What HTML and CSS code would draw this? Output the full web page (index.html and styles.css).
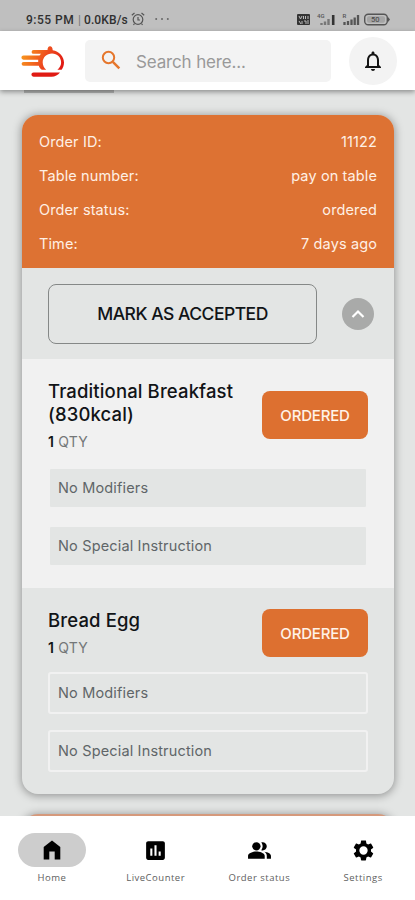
FILE: index.html
```html
<!DOCTYPE html>
<html lang="en">
<head>
<meta charset="utf-8">
<meta name="viewport" content="width=device-width, initial-scale=1">
<title>Orders</title>
<link rel="stylesheet" href="styles.css">
</head>
<body>
<div class="app">
  <div class="status">
    <span class="clock">9:55 PM</span><span class="bar">|</span><span class="speed">0.0KB/s</span>
    <svg class="alarm" viewBox="0 0 14 14" width="14" height="14" fill="none" stroke="#555" stroke-width="1.2"><circle cx="7" cy="7.5" r="4.800"/><path d="M7 5v3h2M.8 3.200 3.500 1M13.200 3.200 10.500 1M3.500 11.500l-1 1.500M10.500 11.500l1 1.500"/></svg>
    <svg class="dots" viewBox="0 0 14 4" width="14" height="4" fill="#666"><circle cx="1.200" cy="2" r="1"/><circle cx="7" cy="2" r="1"/><circle cx="12.800" cy="2" r="1"/></svg>
    <svg class="signals" viewBox="0 0 94 14" width="94" height="14">
      <rect x="0" y="2" width="13" height="11" rx="1" fill="#333"/>
      <path d="M2 4l1.500 3L5 4M6.500 4v3M8.500 4v3M11 4v3M2 9l2 3M5 9v3M7 9h2v3M11 8v4" stroke="#bbb" fill="none"/>
      <text x="20" y="5.500" class="tiny">4G</text>
      <path d="M24.500 13v-2M28 13V9.500M31.500 13V7" stroke="#777" stroke-width="2.400"/><path d="M36.200 13V3" stroke="#333" stroke-width="2.600"/>
      <text x="45.500" y="5.500" class="tiny">R</text>
      <path d="M47.500 13v-3M51 13v-4M54.500 13V7.500M57.700 13V5.500M61 13V3" stroke="#555" stroke-width="2.300"/>
      <rect x="67.700" y="2.200" width="22.600" height="10.600" rx="3.500" fill="none" stroke="#555" stroke-width="1.400"/>
      <path d="M91 5l2 2.500-2 2.500z" fill="#555"/>
      <rect x="70" y="4.300" width="18" height="6.400" rx="2" fill="#a5a5a5"/>
      <text x="74" y="10.300" class="charge">50</text>
    </svg>
  </div>
  <header class="header">
    <svg class="logo" viewBox="0 0 44 34" width="44" height="34">
      <defs><linearGradient id="flame" gradientUnits="userSpaceOnUse" x1="4" y1="8" x2="40" y2="28"><stop offset="0" stop-color="#f7931e"/><stop offset=".5" stop-color="#ee4b1e"/><stop offset="1" stop-color="#df1512"/></linearGradient></defs>
      <g fill="url(#flame)">
        <path d="M12.500 6H26.500c0-2 1-3.700 2.500-3.700s2.700 1.500 2.700 3.900C38 7.300 43 12.500 43 18.500c0 3-1 5.300-2.400 7.200h-4.200c2.200-1.800 3.700-4.200 3.700-7.200 0-5.200-3.900-9-9.100-9s-9.300 3.800-9.300 9c0 2.900 1.300 5.500 3.500 7.200h-4.400c-1.400-1-2.500-2.400-3-4H2.500a1.900 1.900 0 0 1 0-3.800H17.200v-2.200H2.500a2 2 0 0 1 0-4.200H18.500L20 9.800h-7.500a1.900 1.900 0 0 1 0-3.800z"/>
      </g>
      <path d="M12.500 28.500H39c-2 2.500-5 4.200-8.500 4.200h-18a2.100 2.100 0 0 1 0-4.200z" fill="#e01b14"/>
    </svg>
    <div class="search">
      <svg viewBox="0 0 20 20" width="20" height="20" fill="none" stroke="#e5762c" stroke-width="2"><circle cx="7.500" cy="7.500" r="5.700"/><path d="m11.800 11.800 6.500 6.500" stroke-width="2.500"/></svg>
      <span>Search here...</span>
    </div>
    <div class="bell">
      <svg viewBox="0 0 24 24" width="24" height="24" fill="#151515"><path d="M12 22c1.100 0 2-.9 2-2h-4c0 1.100.9 2 2 2zm6-6v-5c0-3.070-1.630-5.640-4.500-6.320V4c0-.83-.67-1.500-1.500-1.500s-1.500.67-1.500 1.500v.68C7.640 5.360 6 7.920 6 11v5l-2 2v1h16v-1l-2-2zm-2 1H8v-6c0-2.480 1.510-4.500 4-4.500s4 2.020 4 4.500v6z"/></svg>
    </div>
  </header>
  <main class="content">
    <div class="tab-edge"></div>
    <article class="card">
      <dl class="summary">
        <div><dt>Order ID:</dt><dd>11122</dd></div>
        <div><dt>Table number:</dt><dd>pay on table</dd></div>
        <div><dt>Order status:</dt><dd>ordered</dd></div>
        <div><dt>Time:</dt><dd>7 days ago</dd></div>
      </dl>
      <div class="actions">
        <button class="accept">MARK AS ACCEPTED</button>
        <button class="toggle" aria-label="Collapse"><svg viewBox="0 0 14 10" width="14" height="10" fill="none" stroke="#fff" stroke-width="2.200"><path d="m1.500 8 5.500-5.500L12.500 8"/></svg></button>
      </div>
      <section class="item light">
        <div class="item-head">
          <div><h2>Traditional Breakfast<br>(830kcal)</h2><p class="qty"><b>1</b> QTY</p></div>
          <span class="badge">ORDERED</span>
        </div>
        <div class="note">No Modifiers</div>
        <div class="note">No Special Instruction</div>
      </section>
      <section class="item">
        <div class="item-head">
          <div><h2>Bread Egg</h2><p class="qty"><b>1</b> QTY</p></div>
          <span class="badge">ORDERED</span>
        </div>
        <div class="note">No Modifiers</div>
        <div class="note">No Special Instruction</div>
      </section>
    </article>
    <div class="card next"></div>
  </main>
  <nav class="nav">
    <a class="active"><i><svg viewBox="0 0 24 24" width="24" height="24"><path d="M12 2.500 3.700 9v12.500h5.600v-8h5.400v8h5.600V9z"/></svg></i><span>Home</span></a>
    <a><i><svg viewBox="0 0 24 24" width="25" height="25"><path d="M19 3H5c-1.100 0-2 .9-2 2v14c0 1.100.9 2 2 2h14c1.100 0 2-.9 2-2V5c0-1.100-.9-2-2-2zM9 17H7v-7h2v7zm4 0h-2V7h2v10zm4 0h-2v-4h2v4z"/></svg></i><span>LiveCounter</span></a>
    <a><i><svg viewBox="0 0 24 24" width="25" height="25"><path d="M16.670 13.130C18.040 14.060 19 15.320 19 17v3h4v-3c0-2.180-3.570-3.470-6.330-3.870z"/><circle cx="9" cy="8" r="4"/><path d="M15 12c2.210 0 4-1.790 4-4s-1.790-4-4-4c-.47 0-.91.100-1.330.240C14.500 5.270 15 6.580 15 8s-.5 2.730-1.330 3.760c.42.140.86.240 1.330.240zM9 13c-2.670 0-8 1.340-8 4v3h16v-3c0-2.660-5.330-4-8-4z"/></svg></i><span>Order status</span></a>
    <a><i><svg viewBox="0 0 24 24" width="25" height="25"><path d="M19.140 12.940c.04-.3.060-.61.060-.94s-.02-.64-.07-.94l2.030-1.580c.18-.14.230-.41.120-.61l-1.920-3.320c-.12-.22-.37-.29-.59-.22l-2.390.96c-.5-.38-1.030-.7-1.620-.94l-.36-2.540c-.04-.24-.24-.41-.48-.41h-3.840c-.24 0-.43.170-.47.410l-.36 2.540c-.59.240-1.130.570-1.620.940l-2.390-.96c-.22-.08-.47 0-.59.220L2.740 8.870c-.12.210-.08.470.120.610l2.030 1.580c-.05.300-.09.630-.09.940s.02.640.07.940l-2.030 1.580c-.18.140-.23.410-.12.610l1.920 3.320c.12.220.37.290.59.220l2.390-.96c.5.380 1.030.7 1.620.94l.36 2.540c.05.240.24.410.48.410h3.840c.24 0 .44-.17.470-.41l.36-2.540c.59-.24 1.130-.56 1.620-.94l2.390.96c.22.080.47 0 .59-.22l1.920-3.320c.12-.22.070-.47-.12-.61l-2.010-1.580zM12 16a4 4 0 1 1 0-8 4 4 0 0 1 0 8z"/></svg></i><span>Settings</span></a>
  </nav>
</div>
</body>
</html>
```
FILE: styles.css
```css
* { box-sizing: border-box; }
body, h2, p, dl, dd { margin: 0; }
body { font-family: Inter, "Liberation Sans", sans-serif; color: #111417; overflow: hidden; }
button { font: inherit; padding: 0; }
svg { display: block; flex: none; }

.app { width: 415px; height: 900px; display: flex; flex-direction: column; background: #e3e5e4; }

.status { height: 31px; flex: none; display: flex; align-items: center; padding: 8px 24px 0 26px; background: #bfbfbf; font: 500 12px Roboto, sans-serif; color: #303030; white-space: nowrap; }
.clock { width: 49px; letter-spacing: .5px; }
.bar { width: 9px; text-align: center; font-weight: 400; color: #777; }
.speed { width: 47px; letter-spacing: .1px; }
.alarm { margin-top: -1px; }
.dots { margin: -2px 0 0 10px; }
.signals { margin: -2px 0 0 auto; }
.tiny { font-size: 6px; fill: #555; }
.charge { font-size: 7.5px; font-weight: 400; fill: #444; }

.header { height: 59px; flex: none; display: flex; align-items: center; padding: 0 18px 0 21px; background: #fff; box-shadow: 0 2px 5px rgba(0, 0, 0, .38); position: relative; z-index: 2; }
.search { width: 246px; height: 42px; margin-left: 20px; padding-left: 16px; display: flex; align-items: center; gap: 15px; border-radius: 5px; background: #f3f3f3; color: #999; font-size: 17px; letter-spacing: -.15px; }
.search svg { margin-top: -1px; }
.search span { margin-top: 2px; }
.bell { width: 48px; height: 48px; margin-left: auto; border-radius: 50%; background: #f3f3f3; display: grid; place-items: center; }

.content { flex: 1; min-height: 0; overflow: hidden; padding: 0 21px 0 22px; }
.tab-edge { width: 90px; height: 3px; margin: 0 0 22px 2px; background: #b2b4b3; }
.card { height: 679px; border-radius: 16px; overflow: hidden; background: #e3e5e4; box-shadow: 0 1px 8px 1px rgba(0, 0, 0, .34); }
.next { margin-top: 20px; height: 40px; background: #d5997c; }

.summary { height: 153px; padding: 9px 17px 0; background: #dd7233; color: #fff0e5; font-size: 14.5px; letter-spacing: .12px; }
.summary div { height: 34px; display: flex; align-items: center; justify-content: space-between; }

.actions { height: 91px; display: flex; align-items: center; justify-content: space-between; padding: 0 20px 0 26px; }
.accept { width: 269px; height: 60px; border: 1px solid #858887; border-radius: 8px; background: none; color: #111417; font-size: 17.5px; font-weight: 450; letter-spacing: -.5px; white-space: nowrap; }
.toggle { width: 32px; height: 32px; border: 0; border-radius: 50%; background: #a9aaa9; display: grid; place-items: center; }

.item { padding: 21px 26px 0; }
.light { height: 229px; background: #f1f1f1; }
.item-head { display: flex; justify-content: space-between; height: 63px; }
.light .item-head { height: 87px; }
.light .badge { margin-top: 11px; }
h2 { font-size: 18.5px; font-weight: 450; line-height: 23px; white-space: nowrap; letter-spacing: .13px; }
.qty { margin-top: 7px; font-size: 14px; line-height: 17px; letter-spacing: .2px; color: #747778; }
.qty b { color: #111417; font-weight: 600; }
.badge { width: 106px; height: 48px; flex: none; border-radius: 8px; background: #dd7030; color: #fff3e8; display: grid; place-items: center; font-size: 15px; font-weight: 550; letter-spacing: -.2px; }
.note { height: 42px; margin-bottom: 16px; padding: 0 0 2px 8px; display: flex; align-items: center; border: 2px solid #f1f1f1; border-radius: 3px; background: #e3e5e4; color: #606568; font-size: 14.5px; letter-spacing: .16px; }

.nav { height: 84px; flex: none; display: flex; padding-top: 17px; background: #fff; position: relative; z-index: 2; }
.nav a { flex: 1; display: flex; flex-direction: column; align-items: center; gap: 5px; }
.nav i { width: 68px; height: 34px; border-radius: 17px; display: grid; place-items: center; }
.nav .active i { background: #cdcdcd; }
.nav span { font: 9.5px/12px "Open Sans", sans-serif; color: #606060; letter-spacing: .5px; white-space: nowrap; }
```
